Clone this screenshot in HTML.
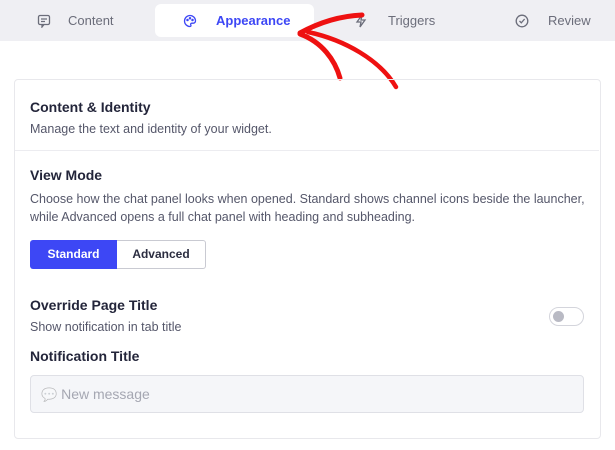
<!DOCTYPE html>
<html><head><style>
body{margin:0;width:615px;height:450px;background:#fff;font-family:"Liberation Sans",sans-serif;position:relative;overflow:hidden;color:#1f2133}
.bar{position:absolute;left:0;top:0;width:615px;height:41px;background:#efeff3}
.tab{position:absolute;top:13px;font-size:13px;color:#6b6d7a}
.act{position:absolute;left:155px;top:4px;width:159px;height:33px;background:#fff;border-radius:6px}
.card{position:absolute;left:14px;top:79px;width:585px;height:358px;border:1px solid #e8e8ec;border-radius:4px}
.t{position:absolute;font-size:14px;font-weight:bold;color:#23253a}
.s{position:absolute;font-size:12.5px;color:#55576a}
</style></head><body>
<div class="bar"></div>
<div class="act"></div>
<svg style="position:absolute;left:37px;top:14px" width="14" height="14" viewBox="0 0 14 14" fill="none" stroke="#6b6d7a" stroke-width="1.3"><rect x="1.5" y="1.5" width="11" height="9" rx="1.5"/><path d="M4 5h6M4 7.5h4M5 10.5v2.5l2-2.5"/></svg>
<div class="tab" style="left:68px">Content</div>
<svg style="position:absolute;left:183px;top:14px" width="14" height="14" viewBox="0 0 14 14" fill="none" stroke="#3d47f5" stroke-width="1.3"><path d="M7 1.5a5.5 5.5 0 1 0 0 11c1 0 1.2-.8.8-1.5-.5-.8 0-1.8 1-1.8h1.5a2.3 2.3 0 0 0 2.2-2.5A5.5 5.5 0 0 0 7 1.5z"/><circle cx="4.5" cy="6" r=".6"/><circle cx="7" cy="4.2" r=".6"/><circle cx="9.5" cy="6" r=".6"/></svg>
<div class="tab" style="left:216px;color:#3d47f5;font-weight:bold">Appearance</div>
<svg style="position:absolute;left:354px;top:14px" width="14" height="14" viewBox="0 0 14 14" fill="none" stroke="#6b6d7a" stroke-width="1.3"><path d="M8 1L3 8h4l-1 5 5-7H7z"/></svg>
<div class="tab" style="left:388px">Triggers</div>
<svg style="position:absolute;left:515px;top:14px" width="14" height="14" viewBox="0 0 14 14" fill="none" stroke="#6b6d7a" stroke-width="1.3"><circle cx="7" cy="7" r="5.8"/><path d="M4.5 7l1.8 1.8L9.6 5"/></svg>
<div class="tab" style="left:548px">Review</div>
<svg style="position:absolute;left:0;top:0" width="615" height="100" fill="none" stroke="#ee1111" stroke-linecap="round"><path d="M300 33C320 22 340 16 362 15" stroke-width="5"/><path d="M300 34C322 42 335 60 340 78" stroke-width="5"/><path d="M308 32C345 40 380 60 396 87" stroke-width="4.5"/></svg>
<div class="card"></div>
<div class="t" style="left:30px;top:99px">Content &amp; Identity</div>
<div class="s" style="left:30px;top:122px">Manage the text and identity of your widget.</div>
<div style="position:absolute;left:15px;top:150px;width:584px;height:1px;background:#ececf0"></div>
<div class="t" style="left:30px;top:167px">View Mode</div>
<div class="s" style="left:30px;top:190px;width:560px;line-height:18px">Choose how the chat panel looks when opened. Standard shows channel icons beside the launcher, while Advanced opens a full chat panel with heading and subheading.</div>
<div style="position:absolute;left:30px;top:240px;width:87px;height:29px;background:#3d47f5;border-radius:3px 0 0 3px;color:#fff;font-size:12px;font-weight:bold;text-align:center;line-height:29px">Standard</div>
<div style="position:absolute;left:117px;top:240px;width:88px;height:27px;border:1px solid #c9cad2;border-left:none;border-radius:0 3px 3px 0;color:#2b2d40;font-size:12px;font-weight:bold;text-align:center;line-height:27px">Advanced</div>
<div class="t" style="left:30px;top:297px">Override Page Title</div>
<div class="s" style="left:30px;top:320px">Show notification in tab title</div>
<div style="position:absolute;left:549px;top:307px;width:33px;height:17px;border:1px solid #d4d5dc;border-radius:10px;background:#fff"><div style="position:absolute;left:3px;top:3px;width:11px;height:11px;border-radius:50%;background:#b9bac4"></div></div>
<div class="t" style="left:30px;top:348px">Notification Title</div>
<div style="position:absolute;left:30px;top:375px;width:552px;height:36px;background:#f5f6f9;border:1px solid #dfe0e6;border-radius:4px"></div>
<div style="position:absolute;left:41px;top:386px;font-size:14px;color:#a5a7b2"><span style="opacity:.25;font-size:13px">💬</span> New message</div>
</body></html>
